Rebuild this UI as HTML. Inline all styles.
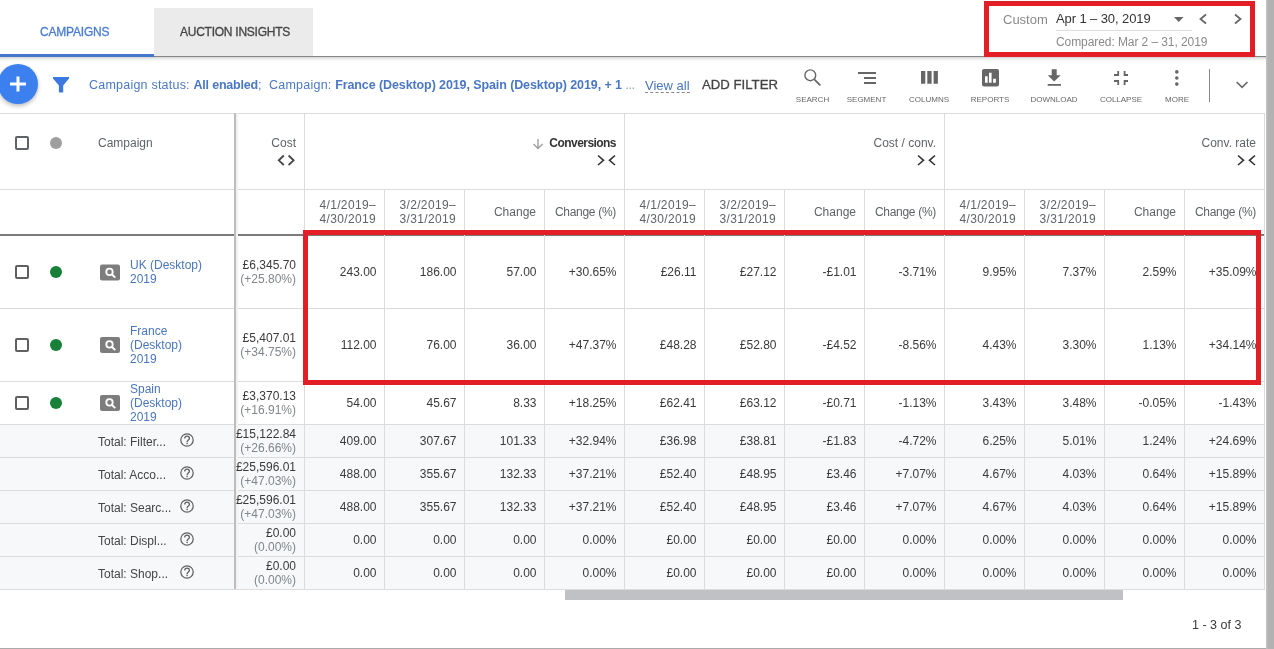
<!DOCTYPE html>
<html><head><meta charset="utf-8"><style>
*{margin:0;padding:0;box-sizing:border-box}
html,body{width:1274px;height:649px;overflow:hidden;background:#fff;font-family:"Liberation Sans",sans-serif;color:#333}
.a{position:absolute;white-space:nowrap}
.r{text-align:right}
.hl{position:absolute;height:1px;background:#dcdcdc}
.vl{position:absolute;width:1px;background:#dcdcdc}
.red{position:absolute;border:5px solid #e41e26}
.lbl{position:absolute;font-size:8px;color:#666;text-align:center;width:60px;top:95px}
svg{position:absolute;overflow:visible}
</style></head><body>
<div style="position:absolute;left:0;top:0;width:1274px;height:649px;will-change:transform">
<div class="a" style="left:154px;top:8px;width:159px;height:48px;background:#ebebeb"></div>
<div class="a" style="left:40px;top:25px;font-size:12px;color:#4a7cd0;letter-spacing:-0.2px;-webkit-text-stroke:0.3px #4a7cd0">CAMPAIGNS</div>
<div class="a" style="left:180px;top:25px;font-size:12px;color:#444;letter-spacing:-0.25px;-webkit-text-stroke:0.3px #444">AUCTION INSIGHTS</div>
<div class="a" style="left:0;top:54px;width:154px;height:3px;background:#4477cc"></div>
<div class="a" style="left:154px;top:56px;width:1112px;height:1px;background:#858585"></div>
<div class="a" style="left:0;top:57px;width:1266px;height:5px;background:linear-gradient(#d4d4d4,#f2f2f2 50%,#fff)"></div>
<div class="red" style="left:984px;top:1px;width:271px;height:56px"></div>
<div class="a" style="left:1003px;top:12px;font-size:13px;color:#8a8a8a">Custom</div>
<div class="a" style="left:1056px;top:11px;font-size:13px;color:#333;letter-spacing:-0.1px">Apr 1 – 30, 2019</div>
<div class="a" style="left:1056px;top:30px;width:136px;height:1px;background:#ddd"></div>
<div class="a" style="left:1056px;top:35px;font-size:12px;color:#8a8a8a;letter-spacing:-0.08px">Compared: Mar 2 – 31, 2019</div>
<svg style="left:0;top:0" width="1" height="1"><path d="M1174 17 L1183.5 17 L1178.75 22 Z" fill="#666"/><path d="M1206 14.5 L1200.5 19 L1206 23.5" fill="none" stroke="#666" stroke-width="1.8"/><path d="M1235 14.5 L1240.5 19 L1235 23.5" fill="none" stroke="#666" stroke-width="1.8"/></svg>
<div class="a" style="left:-2px;top:64px;width:40px;height:40px;border-radius:50%;background:#3b80ee;box-shadow:0 2px 4px rgba(0,0,0,.28)"></div>
<svg style="left:0;top:0" width="1" height="1"><path d="M10 84 H26 M18 76.5 V91.5" stroke="#fff" stroke-width="3"/><path d="M53 77 H69 V78.5 L63.2 85.5 V92.6 H58.9 V85.5 L53 78.5 Z" fill="#3b78e0"/></svg>
<div class="a" style="left:89px;top:78px;font-size:12.5px;color:#4a78c4;letter-spacing:0.22px">Campaign status: <b style="letter-spacing:-0.2px">All enabled</b>;&nbsp; Campaign: <b style="letter-spacing:-0.1px">France (Desktop) 2019, Spain (Desktop) 2019, + 1</b> <span style="color:#8aa;letter-spacing:-0.5px">...</span></div>
<div class="a" style="left:645px;top:78px;font-size:13px;color:#4a76bc">View all</div>
<div class="a" style="left:645px;top:92px;width:45px;height:0;border-top:1px dashed #888"></div>
<div class="a" style="left:702px;top:77px;font-size:13.2px;color:#444;-webkit-text-stroke:0.3px #444">ADD FILTER</div>
<div class="lbl" style="left:782.5px">SEARCH</div>
<div class="lbl" style="left:836.5px">SEGMENT</div>
<div class="lbl" style="left:899px">COLUMNS</div>
<div class="lbl" style="left:960px">REPORTS</div>
<div class="lbl" style="left:1024px">DOWNLOAD</div>
<div class="lbl" style="left:1091px">COLLAPSE</div>
<div class="lbl" style="left:1147px">MORE</div>
<svg style="left:0;top:0" width="1" height="1"><circle cx="810.3" cy="75.3" r="5.4" fill="none" stroke="#666" stroke-width="1.4"/><path d="M814.3 79.3 L820.3 85.3" stroke="#666" stroke-width="1.8"/><path d="M858 73 H876 M864 78 H876 M864 83 H876" stroke="#666" stroke-width="2"/><path d="M921 71 h4.3 v12.7 h-4.3z M927.3 71 h4.3 v12.7 h-4.3z M933.6 71 h4.3 v12.7 h-4.3z" fill="#666"/><rect x="982" y="69" width="17" height="17.5" rx="2" fill="#666"/><path d="M985 76.2 h2.7 v6.5 h-2.7z M989 72.8 h2.6 v9.9 h-2.6z M993.1 78.8 h2.8 v3.9 h-2.8z" fill="#fff"/><path d="M1051.7 69.3 h5 v6 h4 l-6.5 6.2 l-6.5 -6.2 h4z" fill="#666"/><path d="M1047.7 84 h13.3 v1.8 h-13.3z" fill="#666"/><path d="M1114 75 H1118.2 V71 M1128 75 H1124.6 V71 M1114 81 H1118.2 V85 M1128 81 H1124.6 V85" fill="none" stroke="#666" stroke-width="1.8"/><circle cx="1176.8" cy="71.9" r="1.8" fill="#666"/><circle cx="1176.8" cy="78" r="1.8" fill="#666"/><circle cx="1176.8" cy="84.1" r="1.8" fill="#666"/><path d="M1236.7 82 L1242.1 87.4 L1247.5 82" fill="none" stroke="#666" stroke-width="1.6"/></svg>
<div class="a" style="left:1209px;top:69px;width:1px;height:33px;background:#888"></div>
<div class="a" style="left:0;top:424px;width:1265px;height:165px;background:#f7f8fa"></div>
<div class="hl" style="left:0;top:113px;width:1265px"></div>
<div class="hl" style="left:0;top:189px;width:1265px"></div>
<div class="a" style="left:0;top:234px;width:1265px;height:2px;background:#7a7a7a"></div>
<div class="hl" style="left:0;top:308px;width:1265px"></div>
<div class="hl" style="left:0;top:381px;width:1265px"></div>
<div class="hl" style="left:0;top:424px;width:1265px"></div>
<div class="hl" style="left:0;top:457px;width:1265px"></div>
<div class="hl" style="left:0;top:490px;width:1265px"></div>
<div class="hl" style="left:0;top:523px;width:1265px"></div>
<div class="hl" style="left:0;top:556px;width:1265px"></div>
<div class="hl" style="left:0;top:589px;width:1265px"></div>
<div class="vl" style="left:234px;top:113px;height:476px;width:2px;background:#bdbdbd;box-shadow:2px 0 0 #f2f2f2"></div>
<div class="vl" style="left:304px;top:113px;height:476px"></div>
<div class="vl" style="left:384px;top:189px;height:400px"></div>
<div class="vl" style="left:464px;top:189px;height:400px"></div>
<div class="vl" style="left:544px;top:189px;height:400px"></div>
<div class="vl" style="left:624px;top:113px;height:476px"></div>
<div class="vl" style="left:704px;top:189px;height:400px"></div>
<div class="vl" style="left:784px;top:189px;height:400px"></div>
<div class="vl" style="left:864px;top:189px;height:400px"></div>
<div class="vl" style="left:944px;top:113px;height:476px"></div>
<div class="vl" style="left:1024px;top:189px;height:400px"></div>
<div class="vl" style="left:1104px;top:189px;height:400px"></div>
<div class="vl" style="left:1184px;top:189px;height:400px"></div>
<div class="vl" style="left:1264px;top:113px;height:476px"></div>
<div class="a" style="left:15px;top:136px;width:14px;height:14px;border:2px solid #5f6368;border-radius:2px"></div>
<div class="a" style="left:50px;top:137px;width:12px;height:12px;border-radius:50%;background:#9e9e9e"></div>
<div class="a" style="left:98px;top:136px;font-size:12px;color:#5f6368">Campaign</div>
<div class="a r" style="left:200px;width:96px;top:136px;font-size:12px;color:#5f6368">Cost</div>
<svg style="left:0;top:0" width="1" height="1"><path d="M283.8 155.5 L278.8 160.3 L283.8 165 M288.6 155.5 L293.6 160.3 L288.6 165" fill="none" stroke="#444" stroke-width="1.8"/><path d="M598 155.5 L603.5 160.3 L598 165 M615 155.5 L609.5 160.3 L615 165" fill="none" stroke="#333" stroke-width="1.6"/><path d="M918 155.5 L923.5 160.3 L918 165 M935 155.5 L929.5 160.3 L935 165" fill="none" stroke="#333" stroke-width="1.6"/><path d="M1238 155.5 L1243.5 160.3 L1238 165 M1255 155.5 L1249.5 160.3 L1255 165" fill="none" stroke="#333" stroke-width="1.6"/><path d="M538 139 V148.5 M533.5 144 L538 148.5 L542.5 144" fill="none" stroke="#9e9e9e" stroke-width="1.4"/></svg>
<div class="a r" style="left:324px;width:292px;top:136px;font-size:12px;font-weight:bold;color:#333;letter-spacing:-0.55px;">Conversions</div>
<div class="a r" style="left:644px;width:292px;top:136px;font-size:12px;color:#5f6368;">Cost / conv.</div>
<div class="a r" style="left:964px;width:292px;top:136px;font-size:12px;color:#5f6368;">Conv. rate</div>
<div class="a r" style="left:304px;width:72px;top:198px;font-size:12px;line-height:14px;color:#5f6368;letter-spacing:0.35px">4/1/2019–<br>4/30/2019</div>
<div class="a r" style="left:384px;width:72px;top:198px;font-size:12px;line-height:14px;color:#5f6368;letter-spacing:0.35px">3/2/2019–<br>3/31/2019</div>
<div class="a r" style="left:464px;width:72px;top:205px;font-size:12px;color:#5f6368;">Change</div>
<div class="a r" style="left:544px;width:72px;top:205px;font-size:12px;color:#5f6368;letter-spacing:-0.3px;">Change (%)</div>
<div class="a r" style="left:624px;width:72px;top:198px;font-size:12px;line-height:14px;color:#5f6368;letter-spacing:0.35px">4/1/2019–<br>4/30/2019</div>
<div class="a r" style="left:704px;width:72px;top:198px;font-size:12px;line-height:14px;color:#5f6368;letter-spacing:0.35px">3/2/2019–<br>3/31/2019</div>
<div class="a r" style="left:784px;width:72px;top:205px;font-size:12px;color:#5f6368;">Change</div>
<div class="a r" style="left:864px;width:72px;top:205px;font-size:12px;color:#5f6368;letter-spacing:-0.3px;">Change (%)</div>
<div class="a r" style="left:944px;width:72px;top:198px;font-size:12px;line-height:14px;color:#5f6368;letter-spacing:0.35px">4/1/2019–<br>4/30/2019</div>
<div class="a r" style="left:1024px;width:72px;top:198px;font-size:12px;line-height:14px;color:#5f6368;letter-spacing:0.35px">3/2/2019–<br>3/31/2019</div>
<div class="a r" style="left:1104px;width:72px;top:205px;font-size:12px;color:#5f6368;">Change</div>
<div class="a r" style="left:1184px;width:72px;top:205px;font-size:12px;color:#5f6368;letter-spacing:-0.3px;">Change (%)</div>
<div class="a" style="left:15px;top:265.2px;width:14px;height:14px;border:2px solid #606060;border-radius:2px"></div>
<div class="a" style="left:50px;top:266.2px;width:12px;height:12px;border-radius:50%;background:#188038"></div>
<div class="a" style="left:130px;top:258.0px;font-size:12px;line-height:14px;color:#4a76bc">UK (Desktop)<br>2019</div>
<div class="a r" style="left:304px;width:72.5px;top:265.0px;font-size:12px;color:#3a3a3a">243.00</div>
<div class="a r" style="left:384px;width:72.5px;top:265.0px;font-size:12px;color:#3a3a3a">186.00</div>
<div class="a r" style="left:464px;width:72.5px;top:265.0px;font-size:12px;color:#3a3a3a">57.00</div>
<div class="a r" style="left:544px;width:72.5px;top:265.0px;font-size:12px;color:#3a3a3a">+30.65%</div>
<div class="a r" style="left:624px;width:72.5px;top:265.0px;font-size:12px;color:#3a3a3a">£26.11</div>
<div class="a r" style="left:704px;width:72.5px;top:265.0px;font-size:12px;color:#3a3a3a">£27.12</div>
<div class="a r" style="left:784px;width:72.5px;top:265.0px;font-size:12px;color:#3a3a3a">-£1.01</div>
<div class="a r" style="left:864px;width:72.5px;top:265.0px;font-size:12px;color:#3a3a3a">-3.71%</div>
<div class="a r" style="left:944px;width:72.5px;top:265.0px;font-size:12px;color:#3a3a3a">9.95%</div>
<div class="a r" style="left:1024px;width:72.5px;top:265.0px;font-size:12px;color:#3a3a3a">7.37%</div>
<div class="a r" style="left:1104px;width:72.5px;top:265.0px;font-size:12px;color:#3a3a3a">2.59%</div>
<div class="a r" style="left:1184px;width:72.5px;top:265.0px;font-size:12px;color:#3a3a3a">+35.09%</div>
<div class="a r" style="left:200px;width:96px;top:258.0px;font-size:12px;line-height:14px;color:#3a3a3a">£6,345.70<br><span style="color:#80868b">(+25.80%)</span></div>
<div class="a" style="left:15px;top:337.7px;width:14px;height:14px;border:2px solid #606060;border-radius:2px"></div>
<div class="a" style="left:50px;top:338.7px;width:12px;height:12px;border-radius:50%;background:#188038"></div>
<div class="a" style="left:130px;top:323.5px;font-size:12px;line-height:14px;color:#4a76bc">France<br>(Desktop)<br>2019</div>
<div class="a r" style="left:304px;width:72.5px;top:337.5px;font-size:12px;color:#3a3a3a">112.00</div>
<div class="a r" style="left:384px;width:72.5px;top:337.5px;font-size:12px;color:#3a3a3a">76.00</div>
<div class="a r" style="left:464px;width:72.5px;top:337.5px;font-size:12px;color:#3a3a3a">36.00</div>
<div class="a r" style="left:544px;width:72.5px;top:337.5px;font-size:12px;color:#3a3a3a">+47.37%</div>
<div class="a r" style="left:624px;width:72.5px;top:337.5px;font-size:12px;color:#3a3a3a">£48.28</div>
<div class="a r" style="left:704px;width:72.5px;top:337.5px;font-size:12px;color:#3a3a3a">£52.80</div>
<div class="a r" style="left:784px;width:72.5px;top:337.5px;font-size:12px;color:#3a3a3a">-£4.52</div>
<div class="a r" style="left:864px;width:72.5px;top:337.5px;font-size:12px;color:#3a3a3a">-8.56%</div>
<div class="a r" style="left:944px;width:72.5px;top:337.5px;font-size:12px;color:#3a3a3a">4.43%</div>
<div class="a r" style="left:1024px;width:72.5px;top:337.5px;font-size:12px;color:#3a3a3a">3.30%</div>
<div class="a r" style="left:1104px;width:72.5px;top:337.5px;font-size:12px;color:#3a3a3a">1.13%</div>
<div class="a r" style="left:1184px;width:72.5px;top:337.5px;font-size:12px;color:#3a3a3a">+34.14%</div>
<div class="a r" style="left:200px;width:96px;top:330.5px;font-size:12px;line-height:14px;color:#3a3a3a">£5,407.01<br><span style="color:#80868b">(+34.75%)</span></div>
<div class="a" style="left:15px;top:395.7px;width:14px;height:14px;border:2px solid #606060;border-radius:2px"></div>
<div class="a" style="left:50px;top:396.7px;width:12px;height:12px;border-radius:50%;background:#188038"></div>
<div class="a" style="left:130px;top:381.5px;font-size:12px;line-height:14px;color:#4a76bc">Spain<br>(Desktop)<br>2019</div>
<div class="a r" style="left:304px;width:72.5px;top:395.5px;font-size:12px;color:#3a3a3a">54.00</div>
<div class="a r" style="left:384px;width:72.5px;top:395.5px;font-size:12px;color:#3a3a3a">45.67</div>
<div class="a r" style="left:464px;width:72.5px;top:395.5px;font-size:12px;color:#3a3a3a">8.33</div>
<div class="a r" style="left:544px;width:72.5px;top:395.5px;font-size:12px;color:#3a3a3a">+18.25%</div>
<div class="a r" style="left:624px;width:72.5px;top:395.5px;font-size:12px;color:#3a3a3a">£62.41</div>
<div class="a r" style="left:704px;width:72.5px;top:395.5px;font-size:12px;color:#3a3a3a">£63.12</div>
<div class="a r" style="left:784px;width:72.5px;top:395.5px;font-size:12px;color:#3a3a3a">-£0.71</div>
<div class="a r" style="left:864px;width:72.5px;top:395.5px;font-size:12px;color:#3a3a3a">-1.13%</div>
<div class="a r" style="left:944px;width:72.5px;top:395.5px;font-size:12px;color:#3a3a3a">3.43%</div>
<div class="a r" style="left:1024px;width:72.5px;top:395.5px;font-size:12px;color:#3a3a3a">3.48%</div>
<div class="a r" style="left:1104px;width:72.5px;top:395.5px;font-size:12px;color:#3a3a3a">-0.05%</div>
<div class="a r" style="left:1184px;width:72.5px;top:395.5px;font-size:12px;color:#3a3a3a">-1.43%</div>
<div class="a r" style="left:200px;width:96px;top:388.5px;font-size:12px;line-height:14px;color:#3a3a3a">£3,370.13<br><span style="color:#80868b">(+16.91%)</span></div>
<svg style="left:0;top:0" width="1" height="1"><rect x="100" y="264.4" width="20" height="16" rx="2" fill="#7d7d7d"/><circle cx="109.5" cy="271.9" r="3.2" fill="none" stroke="#fff" stroke-width="1.8"/><path d="M111.8 274.2 L115.2 277.59999999999997" stroke="#fff" stroke-width="2"/><rect x="100" y="336.9" width="20" height="16" rx="2" fill="#7d7d7d"/><circle cx="109.5" cy="344.4" r="3.2" fill="none" stroke="#fff" stroke-width="1.8"/><path d="M111.8 346.7 L115.2 350.09999999999997" stroke="#fff" stroke-width="2"/><rect x="100" y="394.9" width="20" height="16" rx="2" fill="#7d7d7d"/><circle cx="109.5" cy="402.4" r="3.2" fill="none" stroke="#fff" stroke-width="1.8"/><path d="M111.8 404.7 L115.2 408.09999999999997" stroke="#fff" stroke-width="2"/></svg>
<div class="a" style="left:98px;top:434.5px;font-size:12px;color:#444">Total: Filter...</div>
<div class="a r" style="left:304px;width:72.5px;top:433.5px;font-size:12px;color:#3a3a3a">409.00</div>
<div class="a r" style="left:384px;width:72.5px;top:433.5px;font-size:12px;color:#3a3a3a">307.67</div>
<div class="a r" style="left:464px;width:72.5px;top:433.5px;font-size:12px;color:#3a3a3a">101.33</div>
<div class="a r" style="left:544px;width:72.5px;top:433.5px;font-size:12px;color:#3a3a3a">+32.94%</div>
<div class="a r" style="left:624px;width:72.5px;top:433.5px;font-size:12px;color:#3a3a3a">£36.98</div>
<div class="a r" style="left:704px;width:72.5px;top:433.5px;font-size:12px;color:#3a3a3a">£38.81</div>
<div class="a r" style="left:784px;width:72.5px;top:433.5px;font-size:12px;color:#3a3a3a">-£1.83</div>
<div class="a r" style="left:864px;width:72.5px;top:433.5px;font-size:12px;color:#3a3a3a">-4.72%</div>
<div class="a r" style="left:944px;width:72.5px;top:433.5px;font-size:12px;color:#3a3a3a">6.25%</div>
<div class="a r" style="left:1024px;width:72.5px;top:433.5px;font-size:12px;color:#3a3a3a">5.01%</div>
<div class="a r" style="left:1104px;width:72.5px;top:433.5px;font-size:12px;color:#3a3a3a">1.24%</div>
<div class="a r" style="left:1184px;width:72.5px;top:433.5px;font-size:12px;color:#3a3a3a">+24.69%</div>
<div class="a r" style="left:200px;width:96px;top:426.5px;font-size:12px;line-height:14px;color:#3a3a3a">£15,122.84<br><span style="color:#80868b">(+26.66%)</span></div>
<div class="a" style="left:98px;top:467.5px;font-size:12px;color:#444">Total: Acco...</div>
<div class="a r" style="left:304px;width:72.5px;top:466.5px;font-size:12px;color:#3a3a3a">488.00</div>
<div class="a r" style="left:384px;width:72.5px;top:466.5px;font-size:12px;color:#3a3a3a">355.67</div>
<div class="a r" style="left:464px;width:72.5px;top:466.5px;font-size:12px;color:#3a3a3a">132.33</div>
<div class="a r" style="left:544px;width:72.5px;top:466.5px;font-size:12px;color:#3a3a3a">+37.21%</div>
<div class="a r" style="left:624px;width:72.5px;top:466.5px;font-size:12px;color:#3a3a3a">£52.40</div>
<div class="a r" style="left:704px;width:72.5px;top:466.5px;font-size:12px;color:#3a3a3a">£48.95</div>
<div class="a r" style="left:784px;width:72.5px;top:466.5px;font-size:12px;color:#3a3a3a">£3.46</div>
<div class="a r" style="left:864px;width:72.5px;top:466.5px;font-size:12px;color:#3a3a3a">+7.07%</div>
<div class="a r" style="left:944px;width:72.5px;top:466.5px;font-size:12px;color:#3a3a3a">4.67%</div>
<div class="a r" style="left:1024px;width:72.5px;top:466.5px;font-size:12px;color:#3a3a3a">4.03%</div>
<div class="a r" style="left:1104px;width:72.5px;top:466.5px;font-size:12px;color:#3a3a3a">0.64%</div>
<div class="a r" style="left:1184px;width:72.5px;top:466.5px;font-size:12px;color:#3a3a3a">+15.89%</div>
<div class="a r" style="left:200px;width:96px;top:459.5px;font-size:12px;line-height:14px;color:#3a3a3a">£25,596.01<br><span style="color:#80868b">(+47.03%)</span></div>
<div class="a" style="left:98px;top:500.5px;font-size:12px;color:#444">Total: Searc...</div>
<div class="a r" style="left:304px;width:72.5px;top:499.5px;font-size:12px;color:#3a3a3a">488.00</div>
<div class="a r" style="left:384px;width:72.5px;top:499.5px;font-size:12px;color:#3a3a3a">355.67</div>
<div class="a r" style="left:464px;width:72.5px;top:499.5px;font-size:12px;color:#3a3a3a">132.33</div>
<div class="a r" style="left:544px;width:72.5px;top:499.5px;font-size:12px;color:#3a3a3a">+37.21%</div>
<div class="a r" style="left:624px;width:72.5px;top:499.5px;font-size:12px;color:#3a3a3a">£52.40</div>
<div class="a r" style="left:704px;width:72.5px;top:499.5px;font-size:12px;color:#3a3a3a">£48.95</div>
<div class="a r" style="left:784px;width:72.5px;top:499.5px;font-size:12px;color:#3a3a3a">£3.46</div>
<div class="a r" style="left:864px;width:72.5px;top:499.5px;font-size:12px;color:#3a3a3a">+7.07%</div>
<div class="a r" style="left:944px;width:72.5px;top:499.5px;font-size:12px;color:#3a3a3a">4.67%</div>
<div class="a r" style="left:1024px;width:72.5px;top:499.5px;font-size:12px;color:#3a3a3a">4.03%</div>
<div class="a r" style="left:1104px;width:72.5px;top:499.5px;font-size:12px;color:#3a3a3a">0.64%</div>
<div class="a r" style="left:1184px;width:72.5px;top:499.5px;font-size:12px;color:#3a3a3a">+15.89%</div>
<div class="a r" style="left:200px;width:96px;top:492.5px;font-size:12px;line-height:14px;color:#3a3a3a">£25,596.01<br><span style="color:#80868b">(+47.03%)</span></div>
<div class="a" style="left:98px;top:533.5px;font-size:12px;color:#444">Total: Displ...</div>
<div class="a r" style="left:304px;width:72.5px;top:532.5px;font-size:12px;color:#3a3a3a">0.00</div>
<div class="a r" style="left:384px;width:72.5px;top:532.5px;font-size:12px;color:#3a3a3a">0.00</div>
<div class="a r" style="left:464px;width:72.5px;top:532.5px;font-size:12px;color:#3a3a3a">0.00</div>
<div class="a r" style="left:544px;width:72.5px;top:532.5px;font-size:12px;color:#3a3a3a">0.00%</div>
<div class="a r" style="left:624px;width:72.5px;top:532.5px;font-size:12px;color:#3a3a3a">£0.00</div>
<div class="a r" style="left:704px;width:72.5px;top:532.5px;font-size:12px;color:#3a3a3a">£0.00</div>
<div class="a r" style="left:784px;width:72.5px;top:532.5px;font-size:12px;color:#3a3a3a">£0.00</div>
<div class="a r" style="left:864px;width:72.5px;top:532.5px;font-size:12px;color:#3a3a3a">0.00%</div>
<div class="a r" style="left:944px;width:72.5px;top:532.5px;font-size:12px;color:#3a3a3a">0.00%</div>
<div class="a r" style="left:1024px;width:72.5px;top:532.5px;font-size:12px;color:#3a3a3a">0.00%</div>
<div class="a r" style="left:1104px;width:72.5px;top:532.5px;font-size:12px;color:#3a3a3a">0.00%</div>
<div class="a r" style="left:1184px;width:72.5px;top:532.5px;font-size:12px;color:#3a3a3a">0.00%</div>
<div class="a r" style="left:200px;width:96px;top:525.5px;font-size:12px;line-height:14px;color:#3a3a3a">£0.00<br><span style="color:#80868b">(0.00%)</span></div>
<div class="a" style="left:98px;top:566.5px;font-size:12px;color:#444">Total: Shop...</div>
<div class="a r" style="left:304px;width:72.5px;top:565.5px;font-size:12px;color:#3a3a3a">0.00</div>
<div class="a r" style="left:384px;width:72.5px;top:565.5px;font-size:12px;color:#3a3a3a">0.00</div>
<div class="a r" style="left:464px;width:72.5px;top:565.5px;font-size:12px;color:#3a3a3a">0.00</div>
<div class="a r" style="left:544px;width:72.5px;top:565.5px;font-size:12px;color:#3a3a3a">0.00%</div>
<div class="a r" style="left:624px;width:72.5px;top:565.5px;font-size:12px;color:#3a3a3a">£0.00</div>
<div class="a r" style="left:704px;width:72.5px;top:565.5px;font-size:12px;color:#3a3a3a">£0.00</div>
<div class="a r" style="left:784px;width:72.5px;top:565.5px;font-size:12px;color:#3a3a3a">£0.00</div>
<div class="a r" style="left:864px;width:72.5px;top:565.5px;font-size:12px;color:#3a3a3a">0.00%</div>
<div class="a r" style="left:944px;width:72.5px;top:565.5px;font-size:12px;color:#3a3a3a">0.00%</div>
<div class="a r" style="left:1024px;width:72.5px;top:565.5px;font-size:12px;color:#3a3a3a">0.00%</div>
<div class="a r" style="left:1104px;width:72.5px;top:565.5px;font-size:12px;color:#3a3a3a">0.00%</div>
<div class="a r" style="left:1184px;width:72.5px;top:565.5px;font-size:12px;color:#3a3a3a">0.00%</div>
<div class="a r" style="left:200px;width:96px;top:558.5px;font-size:12px;line-height:14px;color:#3a3a3a">£0.00<br><span style="color:#80868b">(0.00%)</span></div>
<svg style="left:0;top:0" width="1" height="1"><circle cx="187" cy="440.0" r="6.2" fill="none" stroke="#606060" stroke-width="1.25"/><path d="M184.7 438.4 A2.35 2.35 0 1 1 189.4 438.4 C189.4 439.9 187.1 440.2 187.1 441.9" fill="none" stroke="#606060" stroke-width="1.3"/><circle cx="187.1" cy="443.4" r="0.8" fill="#606060"/><circle cx="187" cy="473.0" r="6.2" fill="none" stroke="#606060" stroke-width="1.25"/><path d="M184.7 471.4 A2.35 2.35 0 1 1 189.4 471.4 C189.4 472.9 187.1 473.2 187.1 474.9" fill="none" stroke="#606060" stroke-width="1.3"/><circle cx="187.1" cy="476.4" r="0.8" fill="#606060"/><circle cx="187" cy="506.0" r="6.2" fill="none" stroke="#606060" stroke-width="1.25"/><path d="M184.7 504.4 A2.35 2.35 0 1 1 189.4 504.4 C189.4 505.9 187.1 506.2 187.1 507.9" fill="none" stroke="#606060" stroke-width="1.3"/><circle cx="187.1" cy="509.4" r="0.8" fill="#606060"/><circle cx="187" cy="539.0" r="6.2" fill="none" stroke="#606060" stroke-width="1.25"/><path d="M184.7 537.4 A2.35 2.35 0 1 1 189.4 537.4 C189.4 538.9 187.1 539.2 187.1 540.9" fill="none" stroke="#606060" stroke-width="1.3"/><circle cx="187.1" cy="542.4" r="0.8" fill="#606060"/><circle cx="187" cy="572.0" r="6.2" fill="none" stroke="#606060" stroke-width="1.25"/><path d="M184.7 570.4 A2.35 2.35 0 1 1 189.4 570.4 C189.4 571.9 187.1 572.2 187.1 573.9" fill="none" stroke="#606060" stroke-width="1.3"/><circle cx="187.1" cy="575.4" r="0.8" fill="#606060"/></svg>
<div class="red" style="left:303px;top:230px;width:958px;height:155px"></div>
<div class="a" style="left:565px;top:590px;width:558px;height:10px;background:#c0c1c5"></div>
<div class="a" style="left:1192px;top:618px;font-size:12.5px;color:#3a3a3a">1 - 3 of 3</div>
<div class="a" style="left:1266px;top:0;width:8px;height:649px;background:linear-gradient(90deg,#c4c4c4,#b2b2b2 30%,#b2b2b2)"></div>
<div class="a" style="left:0;top:648px;width:1266px;height:1px;background:#aaa"></div>
</div></body></html>
